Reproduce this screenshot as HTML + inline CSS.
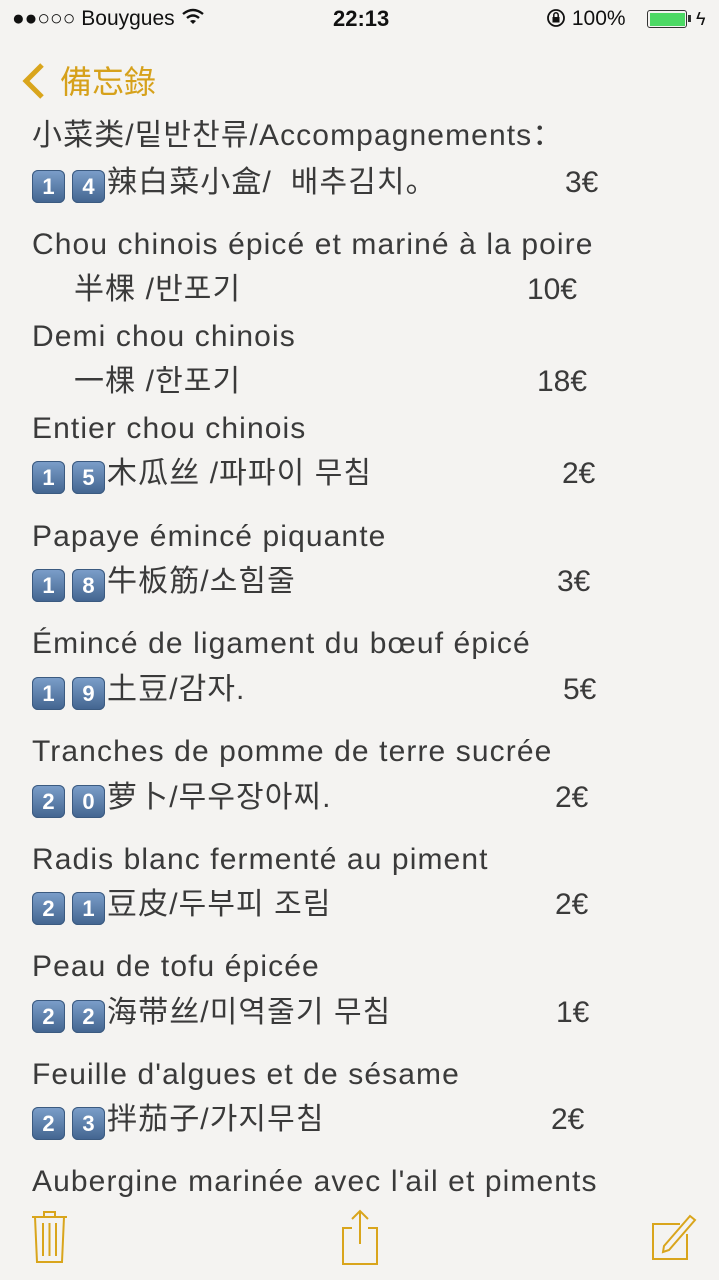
<!DOCTYPE html>
<html><head><meta charset="utf-8">
<style>
html,body{margin:0;padding:0}
body{width:719px;height:1280px;position:relative;overflow:hidden;background:#f4f3f1;font-family:"Liberation Sans","Noto Sans CJK SC","Noto Sans CJK KR",sans-serif;color:#333}
.l{position:absolute;left:32px;font-size:30px;letter-spacing:1.1px;line-height:36px;white-space:nowrap;color:#3a3a3a}
.p{position:absolute;font-size:30px;line-height:36px;color:#3a3a3a}
.k{display:inline-block;width:33px;height:33px;border-radius:6px;background:linear-gradient(#7c9fca,#42648f);color:#fff;font-size:22px;font-weight:bold;text-align:center;line-height:33px;vertical-align:-2px;margin-right:7px;letter-spacing:0;box-shadow:inset 0 0 0 1px #3b5a80}
.k+.k{margin-right:2px}
.sb{position:absolute;top:5px;font-size:21px;line-height:28px;color:#111}
</style></head><body>
<div class="sb" style="left:12px">●●○○○ Bouygues
<svg width="24" height="18" viewBox="0 0 24 18" style="vertical-align:-1px"><path d="M2 6 Q12 -2 22 6" stroke="#111" stroke-width="2.4" fill="none"/><path d="M6 10 Q12 5 18 10" stroke="#111" stroke-width="2.4" fill="none"/><path d="M12 16 L9 13 Q12 11 15 13Z" fill="#111"/></svg></div>
<div class="sb" style="left:333px;font-weight:bold;font-size:22px">22:13</div>
<div class="sb" style="left:546px">
<svg width="20" height="20" viewBox="0 0 20 20" style="vertical-align:-3px"><circle cx="10" cy="10" r="8" stroke="#111" stroke-width="1.8" fill="none"/><rect x="6.5" y="9" width="7" height="5.5" fill="#111"/><path d="M7.8 9V7a2.2 2.2 0 0 1 4.4 0v2" stroke="#111" stroke-width="1.5" fill="none"/></svg> 100%</div>
<div style="position:absolute;left:647px;top:10px;width:40px;height:18px;border:1.5px solid #333;border-radius:3px;box-sizing:border-box;padding:1.5px"><div style="background:#4cd964;height:100%"></div></div>
<div style="position:absolute;left:688px;top:15px;width:3px;height:7px;background:#333"></div>
<div class="sb" style="left:696px;font-size:18px">ϟ</div>

<svg style="position:absolute;left:20px;top:62px" width="28" height="38" viewBox="0 0 28 38"><path d="M22 3 L6 19 L22 35" stroke="#d9a51c" stroke-width="5" fill="none"/></svg>
<div style="position:absolute;left:60px;top:61px;font-size:32px;line-height:38px;color:#d6a11b;font-family:'Noto Sans CJK TC',sans-serif">備忘錄</div>

<div class="l" style="top:118px">小菜类/밑반찬류/Accompagnements：</div>
<div class="l" style="top:165px"><span class="k">1</span><span class="k">4</span>辣白菜小盒/&nbsp; 배추김치。</div><div class="p" style="left:565px;top:165px">3€</div>
<div class="l" style="top:227px">Chou chinois épicé et mariné à la poire</div>
<div class="l" style="top:272px;left:74px">半棵 /반포기</div><div class="p" style="left:527px;top:272px">10€</div>
<div class="l" style="top:319px">Demi chou chinois</div>
<div class="l" style="top:364px;left:74px">一棵 /한포기</div><div class="p" style="left:537px;top:364px">18€</div>
<div class="l" style="top:411px">Entier chou chinois</div>
<div class="l" style="top:456px"><span class="k">1</span><span class="k">5</span>木瓜丝 /파파이 무침</div><div class="p" style="left:562px;top:456px">2€</div>
<div class="l" style="top:519px">Papaye émincé piquante</div>
<div class="l" style="top:564px"><span class="k">1</span><span class="k">8</span>牛板筋/소힘줄</div><div class="p" style="left:557px;top:564px">3€</div>
<div class="l" style="top:626px">Émincé de ligament du bœuf épicé</div>
<div class="l" style="top:672px"><span class="k">1</span><span class="k">9</span>土豆/감자.</div><div class="p" style="left:563px;top:672px">5€</div>
<div class="l" style="top:734px">Tranches de pomme de terre sucrée</div>
<div class="l" style="top:780px"><span class="k">2</span><span class="k">0</span>萝卜/무우장아찌.</div><div class="p" style="left:555px;top:780px">2€</div>
<div class="l" style="top:842px">Radis blanc fermenté au piment</div>
<div class="l" style="top:887px"><span class="k">2</span><span class="k">1</span>豆皮/두부피 조림</div><div class="p" style="left:555px;top:887px">2€</div>
<div class="l" style="top:949px">Peau de tofu épicée</div>
<div class="l" style="top:995px"><span class="k">2</span><span class="k">2</span>海带丝/미역줄기 무침</div><div class="p" style="left:556px;top:995px">1€</div>
<div class="l" style="top:1057px">Feuille d'algues et de sésame</div>
<div class="l" style="top:1102px"><span class="k">2</span><span class="k">3</span>拌茄子/가지무침</div><div class="p" style="left:551px;top:1102px">2€</div>
<div class="l" style="top:1164px">Aubergine marinée avec l'ail et piments</div>

<svg style="position:absolute;left:30px;top:1210px" width="40" height="55" viewBox="0 0 40 55"><g stroke="#d9a51c" stroke-width="2" fill="none"><path d="M2 7H37"/><path d="M14 7V2H25V7"/><path d="M5 7L7 52H32L34 7"/><path d="M13 13V46M19.5 13V46M26 13V46"/></g></svg>
<svg style="position:absolute;left:340px;top:1208px" width="40" height="58" viewBox="0 0 40 58"><g stroke="#d9a51c" stroke-width="2" fill="none"><path d="M12 20H3V56H37V20H28"/><path d="M20 36V3M12 11L20 3L28 11"/></g></svg>
<svg style="position:absolute;left:650px;top:1212px" width="48" height="50" viewBox="0 0 48 50"><g stroke="#d9a51c" stroke-width="2" fill="none"><path d="M30 12H3V47H37V22"/><path d="M14 34L40 4L45 8L19 38L13 40Z"/></g></svg>
</body></html>
